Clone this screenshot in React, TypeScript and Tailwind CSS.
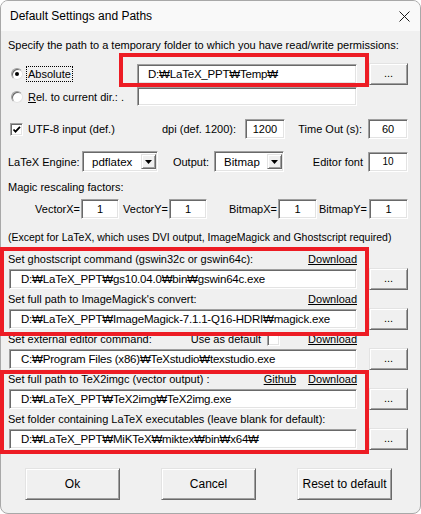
import React from 'react';

// classic Win32 3D edges
const sunken =
  'bg-white border border-t-[#a0a0a0] border-l-[#a0a0a0] border-r-white border-b-white shadow-[inset_1px_1px_0_#696969,inset_-1px_-1px_0_#e3e3e3]';
const raised =
  'bg-[#f0f0f0] border border-t-[#e3e3e3] border-l-[#e3e3e3] border-r-[#696969] border-b-[#696969] shadow-[inset_1px_1px_0_#ffffff,inset_-1px_-1px_0_#a0a0a0]';

const Browse = () => (
  <div className={`${raised} ml-[12px] w-[39px] h-[22px] flex items-center justify-center text-[11px] leading-none pb-[2px]`}>
    ...
  </div>
);

const PathRow = ({ value }: { value: string }) => (
  <div className="mt-[2px] h-[22px] flex items-center">
    <div className={`${sunken} ml-[1px] w-[348px] h-[20px] flex items-center pl-[11px] text-[11.5px] tracking-[-0.2px] whitespace-nowrap overflow-hidden`}>
      {value}
    </div>
    <Browse />
  </div>
);

const Link = ({ children }: { children: React.ReactNode }) => (
  <span className="underline underline-offset-[1px]">{children}</span>
);

const SmallBox = ({ w, value }: { w: string; value: string }) => (
  <div className={`${sunken} ${w} h-[20px] flex items-center justify-center text-[11px]`}>{value}</div>
);

const Arrow = () => (
  <div className={`${raised} w-[15px] h-[15px] mr-[1px] flex items-center justify-center`}>
    <svg width="7" height="4" viewBox="0 0 7 4">
      <path d="M0 0h7L3.5 4z" fill="#000" />
    </svg>
  </div>
);

const Select = ({ w, value }: { w: string; value: string }) => (
  <div className={`${sunken} ${w} h-[21px] flex items-center`}>
    <span className="flex-1 pl-[9px] text-[11.5px]">{value}</span>
    <Arrow />
  </div>
);

const Radio = ({ checked }: { checked?: boolean }) => (
  <div className="w-[12px] h-[12px] rounded-full bg-white border border-t-[#a0a0a0] border-l-[#a0a0a0] border-r-[#e3e3e3] border-b-[#e3e3e3] flex items-center justify-center shadow-[inset_1px_1px_0_#696969]">
    {checked && <div className="w-[4px] h-[4px] rounded-full bg-black" />}
  </div>
);

const CheckBox = ({ checked }: { checked?: boolean }) => (
  <div className={`${sunken} w-[13px] h-[13px] flex items-center justify-center`}>
    {checked && (
      <svg width="9" height="9" viewBox="0 0 9 9">
        <path d="M1.5 4.5l2 2.2L8 1.8" stroke="#000" strokeWidth="1.8" fill="none" />
      </svg>
    )}
  </div>
);

const RedBox = ({ cls }: { cls: string }) => (
  <div className={`absolute border-4 border-[#ed1c24] pointer-events-none ${cls}`} />
);

export default function App() {
  return (
    <div className="relative w-[421px] h-[514px] bg-white overflow-hidden font-['Liberation_Sans','DejaVu_Sans',Arial,sans-serif] text-black">
      <div className="w-full h-full rounded-[8px] border border-[#a8a8a8] bg-[#f0f0f0] flex flex-col overflow-hidden">
        {/* title bar */}
        <div className="h-[30px] bg-[#f9f9f9] flex items-center pl-[9px] pr-[10px] text-[12px]">
          <span>Default Settings and Paths</span>
          <svg className="ml-auto" width="11" height="11" viewBox="0 0 11 11">
            <path d="M0.5 0.5l10 10M10.5 0.5l-10 10" stroke="#1a1a1a" strokeWidth="1" />
          </svg>
        </div>

        <div className="flex flex-col px-[7px] text-[11px] leading-[14px]">
          <div className="mt-[7px] h-[14px] whitespace-nowrap">
            Specify the path to a temporary folder to which you have read/write permissions:
          </div>

          {/* absolute */}
          <div className="mt-[11px] h-[22px] flex items-center">
            <div className="w-[129px] flex items-center">
              <div className="ml-[3px]">
                <Radio checked />
              </div>
              <span className="ml-[3px] px-[1px] border border-dotted border-black leading-[14px]">Absolute</span>
            </div>
            <div className={`${sunken} w-[220px] h-[20px] flex items-center pl-[10px] text-[11.5px] tracking-[-0.2px]`}>D:₩LaTeX_PPT₩Temp₩</div>
            <Browse />
          </div>

          {/* relative */}
          <div className="mt-[2px] h-[19px] flex items-center">
            <div className="w-[129px] flex items-center">
              <div className="ml-[3px]">
                <Radio />
              </div>
              <span className="ml-[5px] whitespace-nowrap">
                <span className="underline">R</span>el. to current dir.: .
              </span>
            </div>
            <div className={`${sunken} w-[220px] h-[19px]`} />
          </div>

          {/* utf-8 / dpi / timeout */}
          <div className="mt-[13px] h-[20px] flex items-center">
            <div className="w-[152px] flex items-center">
              <div className="ml-[2px]">
                <CheckBox checked />
              </div>
              <span className="ml-[5px]">UTF-8 input (def.)</span>
            </div>
            <div className="w-[85px] text-right pr-[9px] whitespace-nowrap">dpi (def. 1200):</div>
            <SmallBox w="w-[40px]" value="1200" />
            <div className="w-[83px] text-right pr-[6px] whitespace-nowrap">Time Out (s):</div>
            <SmallBox w="w-[40px]" value="60" />
          </div>

          {/* engine / output / editor font */}
          <div className="mt-[12px] h-[21px] flex items-center">
            <div className="w-[74px] whitespace-nowrap">LaTeX Engine:</div>
            <Select w="w-[76px]" value="pdflatex" />
            <div className="w-[56px] text-right pr-[5px]">Output:</div>
            <Select w="w-[70px]" value="Bitmap" />
            <div className="w-[84px] text-right pr-[5px] whitespace-nowrap">Editor font</div>
            <div className={`${sunken} w-[40px] h-[20px] flex items-center justify-center text-[10px]`}>10</div>
          </div>

          <div className="mt-[8px] h-[14px]">Magic rescaling factors:</div>

          {/* rescaling factors */}
          <div className="mt-[5px] h-[20px] flex items-center">
            <div className="w-[73px] text-right pr-[1px]">VectorX=</div>
            <SmallBox w="w-[38px]" value="1" />
            <div className="w-[50px] text-right pr-[1px]">VectorY=</div>
            <SmallBox w="w-[38px]" value="1" />
            <div className="w-[71px] text-right pr-[1px]">BitmapX=</div>
            <SmallBox w="w-[39px]" value="1" />
            <div className="w-[52px] text-right pr-[2px]">BitmapY=</div>
            <SmallBox w="w-[39px]" value="1" />
          </div>

          <div className="mt-[11px] h-[14px] text-[10.5px] whitespace-nowrap">
            (Except for LaTeX, which uses DVI output, ImageMagick and Ghostscript required)
          </div>

          {/* paths */}
          <div className="mt-[8px] h-[14px] w-[349px] flex items-center justify-between whitespace-nowrap">
            <span>Set ghostscript command (gswin32c or gswin64c):</span>
            <Link>Download</Link>
          </div>
          <PathRow value="D:₩LaTeX_PPT₩gs10.04.0₩bin₩gswin64c.exe" />

          <div className="mt-[2px] h-[14px] w-[349px] flex items-center justify-between whitespace-nowrap">
            <span>Set full path to ImageMagick's convert:</span>
            <Link>Download</Link>
          </div>
          <PathRow value="D:₩LaTeX_PPT₩ImageMagick-7.1.1-Q16-HDRI₩magick.exe" />

          <div className="mt-[2px] h-[14px] w-[349px] flex items-center whitespace-nowrap">
            <span>Set external editor command:</span>
            <span className="ml-auto">Use as default</span>
            <div className="ml-[6px] mr-[28px]">
              <CheckBox />
            </div>
            <Link>Download</Link>
          </div>
          <PathRow value="C:₩Program Files (x86)₩TeXstudio₩texstudio.exe" />

          <div className="mt-[2px] h-[14px] w-[349px] flex items-center whitespace-nowrap">
            <span>Set full path to TeX2imgc (vector output) :</span>
            <span className="ml-auto mr-[12px]">
              <Link>Github</Link>
            </span>
            <Link>Download</Link>
          </div>
          <PathRow value="D:₩LaTeX_PPT₩TeX2img₩TeX2img.exe" />

          <div className="mt-[2px] h-[14px] whitespace-nowrap">
            Set folder containing LaTeX executables (leave blank for default):
          </div>
          <PathRow value="D:₩LaTeX_PPT₩MiKTeX₩miktex₩bin₩x64₩" />

          {/* dialog buttons */}
          <div className="mt-[18px] h-[32px] flex ml-[17px] gap-[41px] text-[12px]">
            <div className={`${raised} w-[95px] h-[32px] flex items-center justify-center`}>Ok</div>
            <div className={`${raised} w-[95px] h-[32px] flex items-center justify-center`}>Cancel</div>
            <div className={`${raised} w-[95px] h-[32px] flex items-center justify-center`}>Reset to default</div>
          </div>
        </div>
      </div>

      {/* annotation rectangles */}
      <RedBox cls="left-[119px] top-[53px] w-[250px] h-[34px]" />
      <RedBox cls="left-0 top-[247px] w-[369px] h-[89px]" />
      <RedBox cls="left-0 top-[370px] w-[369px] h-[84px]" />
    </div>
  );
}
